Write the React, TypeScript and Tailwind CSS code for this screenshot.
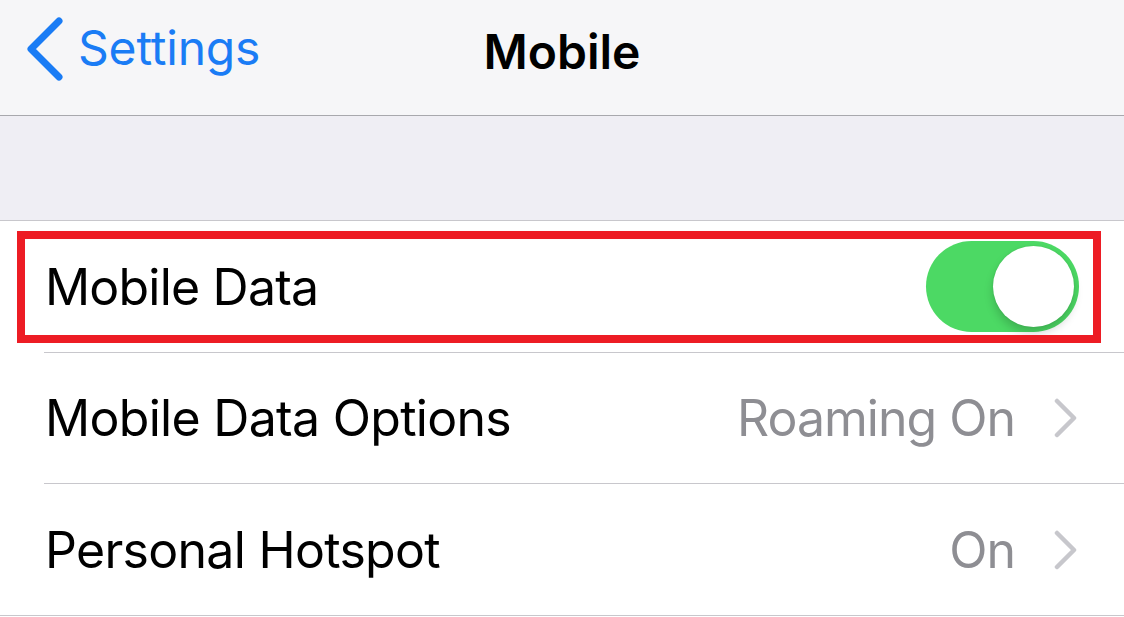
import { useState } from "react";

function Chevron() {
  return (
    <svg width="26" height="40" viewBox="0 0 26 40" className="ml-[38px] shrink-0">
      <path d="M4 3 L21 20 L4 37" fill="none" stroke="#c7c7cc" strokeWidth="4.5" strokeLinecap="round" strokeLinejoin="round" />
    </svg>
  );
}

function Toggle({ on, onClick }: { on: boolean; onClick: () => void }) {
  return (
    <button
      onClick={onClick}
      className={`relative w-[153px] h-[91px] rounded-full shrink-0 ${on ? "bg-[#4cd964]" : "bg-[#e5e5ea]"}`}
    >
      <span
        className={`absolute top-[5px] w-[81px] h-[81px] rounded-full bg-white shadow-[0_6px_10px_rgba(0,0,0,0.18),0_0_2px_rgba(0,0,0,0.1)] ${on ? "left-[67px]" : "left-[5px]"}`}
      />
    </button>
  );
}

export default function App() {
  const [on, setOn] = useState(true);
  return (
    <div className="w-[1124px] h-[617px] overflow-hidden bg-white text-black font-['Inter','Liberation_Sans',sans-serif]">
      <nav className="h-[116px] bg-[#f6f6f8] border-b border-[#a8a8ad] flex items-center pb-[17px] relative">
        <div className="flex items-center pl-[26px] text-[#1a7cf5]">
          <svg width="38" height="64" viewBox="0 0 38 64">
            <path d="M33 4 L5 32 L33 60" fill="none" stroke="#1a7cf5" strokeWidth="7" strokeLinecap="round" strokeLinejoin="round" />
          </svg>
          <span className="ml-[14px] -mt-[3px] text-[48px] leading-none tracking-[-0.2px]">Settings</span>
        </div>
        <span className="absolute left-1/2 top-[28px] -translate-x-1/2 text-[48px] font-semibold leading-none">Mobile</span>
      </nav>

      <div className="h-[105px] bg-[#efeef4] border-b border-[#c8c7cc]" />

      <div className="relative h-[132px] flex flex-col">
        <div className="flex-1 flex items-center pl-[45px] pr-[45px]">
          <span className="flex-1 text-[50px] leading-none tracking-[-0.8px]">Mobile Data</span>
          <Toggle on={on} onClick={() => setOn(!on)} />
        </div>
        <div className="ml-[44px] h-px bg-[#c8c7cc]" />
        <div className="absolute left-[17px] top-[10px] w-[1084px] h-[112px] border-[8px] border-[#ed1c24] pointer-events-none" />
      </div>

      <div className="h-[131px] flex flex-col">
        <div className="flex-1 flex items-center pl-[45px] pr-[45px]">
          <span className="flex-1 text-[50px] leading-none tracking-[-0.7px]">Mobile Data Options</span>
          <span className="text-[50px] leading-none tracking-[-1px] text-[#8e8e93]">Roaming On</span>
          <Chevron />
        </div>
        <div className="ml-[44px] h-px bg-[#c8c7cc]" />
      </div>

      <div className="h-[132px] flex flex-col">
        <div className="flex-1 flex items-center pl-[45px] pr-[45px]">
          <span className="flex-1 text-[50px] leading-none tracking-[-0.7px]">Personal Hotspot</span>
          <span className="text-[50px] leading-none tracking-[-1px] text-[#8e8e93]">On</span>
          <Chevron />
        </div>
        <div className="h-px bg-[#c8c7cc]" />
      </div>
    </div>
  );
}
